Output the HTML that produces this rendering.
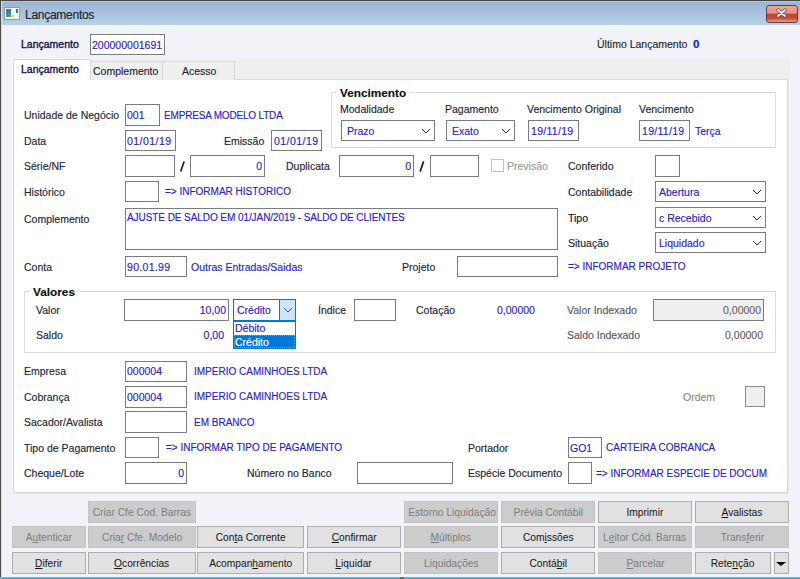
<!DOCTYPE html><html><head><meta charset="utf-8"><style>
*{margin:0;padding:0;box-sizing:content-box}
html,body{width:800px;height:579px;overflow:hidden;background:#f2f3f8;position:relative;font-family:"Liberation Sans",sans-serif}
.t{position:absolute;white-space:nowrap;-webkit-text-stroke:0.15px currentColor}
.b{position:absolute;border:1px solid #797d82}
.r{position:absolute}
.btn{position:absolute;border:1px solid #adadad;background:#e1e1e1;color:#141414;font-size:11px;text-align:center;white-space:nowrap}
.btn span{display:inline-block;transform:scaleX(0.93)}
.btn.dis{border-color:#c4c4c4;background:#cccccc;color:#7c7c7c}
</style></head><body>
<div class="r" style="left:0px;top:0px;width:800px;height:25px;background:linear-gradient(#98b3d2,#b8d0e8);"></div>
<div class="r" style="left:0px;top:0px;width:800px;height:1px;background:#454545;"></div>
<div class="r" style="left:0px;top:1px;width:800px;height:1px;background:#b4c8de;"></div>
<div class="r" style="left:0px;top:0px;width:1px;height:579px;background:#4a4a4a;"></div>
<div class="r" style="left:1px;top:1px;width:1px;height:578px;background:#d7e4f2;"></div>
<div class="r" style="left:4px;top:7px;width:14px;height:11px;background:#f4f4f4;border:1px solid #9a9a9a;"></div>
<div class="r" style="left:6px;top:9px;width:5px;height:8px;background:linear-gradient(#4070b8,#40a868);"></div>
<div class="r" style="left:16px;top:9px;width:2px;height:4px;background:linear-gradient(#2a5ab0,#3a9a50);"></div>
<div class="r" style="left:12px;top:15px;width:2px;height:2px;background:#c8c8c8;"></div>
<div class="t" style="left:25px;top:7.5px;color:#1e2430;font-size:12px;line-height:14px;letter-spacing:-0.27px;">Lançamentos</div>
<div class="r" style="left:766px;top:5px;width:30px;height:16px;border:1px solid #6a3a40;border-radius:3px;background:linear-gradient(#eba79a 0%,#e39180 45%,#c8432a 50%,#c94a30 75%,#e0a090 100%);"></div>
<svg class="r" style="left:775px;top:7px" width="13" height="12"><path d="M3 3 L10 9 M10 3 L3 9" stroke="#505060" stroke-width="3.4" stroke-linecap="round"/><path d="M3 3 L10 9 M10 3 L3 9" stroke="#f4f4f4" stroke-width="1.8" stroke-linecap="round"/></svg>
<div class="r" style="left:2px;top:25px;width:798px;height:552px;background:#f2f3f8;"></div>
<div class="r" style="left:0px;top:577px;width:800px;height:2px;background:linear-gradient(#5cd2ee,#14aacb);"></div>
<div class="r" style="left:400px;top:577px;width:4px;height:2px;background:#6a6e72;"></div>
<div class="t" style="left:21px;top:37.0px;color:#14144a;font-size:10.5px;line-height:14px;-webkit-text-stroke:0.35px currentColor">Lançamento</div>
<div class="b" style="left:90px;top:34px;width:73px;height:19px;background:#fff;border-color:#797d82;"></div>
<div class="t" style="left:92px;top:37.5px;color:#2c24c0;font-size:10.5px;line-height:14px;">200000001691</div>
<div class="t" style="left:597px;top:37.0px;color:#262636;font-size:10.5px;line-height:14px;">Último Lançamento</div>
<div class="t" style="left:693px;top:37.0px;color:#1414f0;font-size:11.5px;line-height:14px;font-weight:bold;">0</div>
<div class="r" style="left:13px;top:59px;width:777px;height:20px;background:#efefef;"></div>
<div class="r" style="left:13px;top:79px;width:773px;height:412px;background:#fff;border:1px solid #d9d9d9;box-shadow:1px 1px 0 #e6e6ea"></div>
<div class="r" style="left:90px;top:61px;width:71px;height:18px;background:#efefef;border:1px solid #d9d9d9;border-bottom:none"></div>
<div class="r" style="left:163px;top:61px;width:71px;height:18px;background:#efefef;border:1px solid #d9d9d9;border-bottom:none;border-left:none"></div>
<div class="r" style="left:13px;top:59px;width:76px;height:20px;background:#fff;border:1px solid #d9d9d9;border-bottom:none"></div>
<div class="t" style="left:21px;top:61.5px;color:#14144a;font-size:10.5px;line-height:14px;-webkit-text-stroke:0.35px currentColor">Lançamento</div>
<div class="t" style="left:93px;top:64.0px;color:#262636;font-size:10.5px;line-height:14px;">Complemento</div>
<div class="t" style="left:182px;top:64.0px;color:#262636;font-size:10.5px;line-height:14px;">Acesso</div>
<div class="t" style="left:24px;top:108.0px;color:#262636;font-size:10.5px;line-height:14px;">Unidade de Negócio</div>
<div class="b" style="left:125px;top:104px;width:33px;height:20px;background:#fff;border-color:#797d82;"></div>
<div class="t" style="left:127px;top:108.0px;color:#2c24c0;font-size:10.5px;line-height:14px;">001</div>
<div class="t" style="left:164px;top:108.75px;color:#2c24c0;font-size:10px;line-height:14px;letter-spacing:-0.18px;">EMPRESA MODELO LTDA</div>
<div class="t" style="left:24px;top:133.5px;color:#262636;font-size:10.5px;line-height:14px;">Data</div>
<div class="b" style="left:125px;top:130px;width:49px;height:19px;background:#fff;border-color:#797d82;"></div>
<div class="t" style="left:127px;top:133.5px;color:#2c24c0;font-size:10.5px;line-height:14px;letter-spacing:0.45px;">01/01/19</div>
<div class="t" style="left:224px;top:133.5px;color:#262636;font-size:10.5px;line-height:14px;">Emissão</div>
<div class="b" style="left:271px;top:130px;width:49px;height:19px;background:#fff;border-color:#797d82;"></div>
<div class="t" style="left:274px;top:133.5px;color:#2c24c0;font-size:10.5px;line-height:14px;letter-spacing:0.45px;">01/01/19</div>
<div class="b" style="left:331px;top:92px;width:443px;height:54px;background:transparent;border-color:#dcdcdc;"></div>
<div class="r" style="left:336px;top:86px;width:74px;height:10px;background:#fff;"></div>
<div class="t" style="left:340px;top:85.5px;color:#101010;font-size:11.8px;line-height:14px;font-weight:bold;">Vencimento</div>
<div class="t" style="left:340px;top:101.5px;color:#262636;font-size:10.5px;line-height:14px;">Modalidade</div>
<div class="t" style="left:445px;top:101.5px;color:#262636;font-size:10.5px;line-height:14px;">Pagamento</div>
<div class="t" style="left:527px;top:101.5px;color:#262636;font-size:10.5px;line-height:14px;">Vencimento Original</div>
<div class="t" style="left:639px;top:101.5px;color:#262636;font-size:10.5px;line-height:14px;">Vencimento</div>
<div class="b" style="left:341px;top:120px;width:92px;height:19px;background:#fff;border-color:#797d82;"></div>
<div class="t" style="left:347px;top:123.5px;color:#2c24c0;font-size:10.5px;line-height:14px;">Prazo</div>
<svg class="r" style="left:420.5px;top:127.5px" width="10" height="6"><path d="M1 1 L5 5 L9 1" fill="none" stroke="#333" stroke-width="1"/></svg>
<div class="b" style="left:446px;top:120px;width:67px;height:19px;background:#fff;border-color:#797d82;"></div>
<div class="t" style="left:452px;top:123.5px;color:#2c24c0;font-size:10.5px;line-height:14px;">Exato</div>
<svg class="r" style="left:500.5px;top:127.5px" width="10" height="6"><path d="M1 1 L5 5 L9 1" fill="none" stroke="#333" stroke-width="1"/></svg>
<div class="b" style="left:528px;top:120px;width:49px;height:19px;background:#fff;border-color:#797d82;"></div>
<div class="t" style="left:531px;top:124.0px;color:#2c24c0;font-size:10.5px;line-height:14px;letter-spacing:0.3px;">19/11/19</div>
<div class="b" style="left:639px;top:120px;width:49px;height:19px;background:#fff;border-color:#797d82;"></div>
<div class="t" style="left:642px;top:124.0px;color:#2c24c0;font-size:10.5px;line-height:14px;letter-spacing:0.3px;">19/11/19</div>
<div class="t" style="left:695px;top:124.0px;color:#2c24c0;font-size:10.5px;line-height:14px;">Terça</div>
<div class="t" style="left:24px;top:159.0px;color:#262636;font-size:10.5px;line-height:14px;">Série/NF</div>
<div class="b" style="left:125px;top:155px;width:48px;height:20px;background:#fff;border-color:#797d82;"></div>
<svg class="r" style="left:176px;top:158px" width="14" height="16"><path d="M4.7 13.6 L8.1 3.4" stroke="#1e1e3a" stroke-width="1.7"/></svg>
<div class="b" style="left:190px;top:155px;width:73px;height:20px;background:#fff;border-color:#797d82;"></div>
<div class="t" style="right:538px;top:159.0px;color:#2c24c0;font-size:10.5px;line-height:14px;">0</div>
<div class="t" style="left:286px;top:159.0px;color:#262636;font-size:10.5px;line-height:14px;">Duplicata</div>
<div class="b" style="left:339px;top:155px;width:73px;height:20px;background:#fff;border-color:#797d82;"></div>
<div class="t" style="right:389px;top:159.0px;color:#2c24c0;font-size:10.5px;line-height:14px;">0</div>
<svg class="r" style="left:416px;top:158px" width="14" height="16"><path d="M4.1 13.6 L7.6 3.4" stroke="#1e1e3a" stroke-width="1.7"/></svg>
<div class="b" style="left:430px;top:155px;width:47px;height:20px;background:#fff;border-color:#797d82;"></div>
<div class="b" style="left:491px;top:159px;width:11px;height:11px;background:#fff;border-color:#c6c6c6;"></div>
<div class="t" style="left:507px;top:159.0px;color:#9a9a9a;font-size:10.5px;line-height:14px;">Previsão</div>
<div class="t" style="left:568px;top:159.0px;color:#262636;font-size:10.5px;line-height:14px;">Conferido</div>
<div class="b" style="left:655px;top:155px;width:23px;height:20px;background:#fff;border-color:#797d82;"></div>
<div class="t" style="left:24px;top:184.5px;color:#262636;font-size:10.5px;line-height:14px;">Histórico</div>
<div class="b" style="left:125px;top:181px;width:32px;height:19px;background:#fff;border-color:#797d82;"></div>
<div class="t" style="left:165px;top:185.25px;color:#2c24c0;font-size:10px;line-height:14px;">=&gt; INFORMAR HISTORICO</div>
<div class="t" style="left:568px;top:184.5px;color:#262636;font-size:10.5px;line-height:14px;">Contabilidade</div>
<div class="b" style="left:655px;top:181px;width:109px;height:19px;background:#fff;border-color:#797d82;"></div>
<div class="t" style="left:659px;top:184.5px;color:#2c24c0;font-size:10.5px;line-height:14px;">Abertura</div>
<svg class="r" style="left:751.5px;top:188.5px" width="10" height="6"><path d="M1 1 L5 5 L9 1" fill="none" stroke="#333" stroke-width="1"/></svg>
<div class="t" style="left:24px;top:211.5px;color:#262636;font-size:10.5px;line-height:14px;">Complemento</div>
<div class="b" style="left:125px;top:208px;width:431px;height:40px;background:#fff;border-color:#797d82;"></div>
<div class="t" style="left:127px;top:211.25px;color:#2c24c0;font-size:10px;line-height:14px;letter-spacing:-0.07px;">AJUSTE DE SALDO EM 01/JAN/2019 - SALDO DE CLIENTES</div>
<div class="t" style="left:568px;top:210.5px;color:#101030;font-size:10.5px;line-height:14px;">Tipo</div>
<div class="b" style="left:655px;top:207px;width:109px;height:19px;background:#fff;border-color:#797d82;"></div>
<div class="t" style="left:659px;top:210.5px;color:#2c24c0;font-size:10.5px;line-height:14px;">c Recebido</div>
<svg class="r" style="left:751.5px;top:214.5px" width="10" height="6"><path d="M1 1 L5 5 L9 1" fill="none" stroke="#333" stroke-width="1"/></svg>
<div class="t" style="left:568px;top:236.0px;color:#262636;font-size:10.5px;line-height:14px;">Situação</div>
<div class="b" style="left:655px;top:232px;width:109px;height:19px;background:#fff;border-color:#797d82;"></div>
<div class="t" style="left:659px;top:235.5px;color:#2c24c0;font-size:10.5px;line-height:14px;">Liquidado</div>
<svg class="r" style="left:751.5px;top:239.5px" width="10" height="6"><path d="M1 1 L5 5 L9 1" fill="none" stroke="#333" stroke-width="1"/></svg>
<div class="t" style="left:24px;top:259.5px;color:#262636;font-size:10.5px;line-height:14px;">Conta</div>
<div class="b" style="left:125px;top:256px;width:60px;height:19px;background:#fff;border-color:#797d82;"></div>
<div class="t" style="left:127px;top:259.5px;color:#2c24c0;font-size:10.5px;line-height:14px;letter-spacing:0.3px;">90.01.99</div>
<div class="t" style="left:191px;top:259.5px;color:#2c24c0;font-size:10.5px;line-height:14px;">Outras Entradas/Saidas</div>
<div class="t" style="left:402px;top:259.5px;color:#262636;font-size:10.5px;line-height:14px;">Projeto</div>
<div class="b" style="left:457px;top:256px;width:99px;height:19px;background:#fff;border-color:#797d82;"></div>
<div class="t" style="left:568px;top:260.25px;color:#2c24c0;font-size:10px;line-height:14px;">=&gt; INFORMAR PROJETO</div>
<div class="b" style="left:24px;top:291px;width:750px;height:60px;background:transparent;border-color:#dcdcdc;"></div>
<div class="r" style="left:30px;top:285px;width:46px;height:12px;background:#fff;"></div>
<div class="t" style="left:33px;top:285.0px;color:#101010;font-size:11.8px;line-height:14px;font-weight:bold;">Valores</div>
<div class="t" style="left:36px;top:303.0px;color:#262636;font-size:10.5px;line-height:14px;">Valor</div>
<div class="b" style="left:124px;top:299px;width:103px;height:20px;background:#fff;border-color:#797d82;"></div>
<div class="t" style="right:574px;top:303.0px;color:#2c24c0;font-size:10.5px;line-height:14px;">10,00</div>
<div class="r" style="left:233px;top:299px;width:61px;height:20px;background:#fff;border:1px solid #0078d7;"></div>
<div class="r" style="left:279px;top:300px;width:16px;height:20px;background:#cce4f7;border-left:1px solid #0078d7;box-sizing:border-box"></div>
<svg class="r" style="left:282.5px;top:307px" width="10" height="6"><path d="M1 1 L5 5 L9 1" fill="none" stroke="#555" stroke-width="1"/></svg>
<div class="t" style="left:237px;top:303.0px;color:#2c24c0;font-size:10.5px;line-height:14px;">Crédito</div>
<div class="r" style="left:233px;top:321px;width:61px;height:26px;background:#fff;border:1px solid #0078d7;"></div>
<div class="r" style="left:234px;top:335px;width:61px;height:13px;background:#0078d7;"></div>
<div class="r" style="left:234px;top:335px;width:59px;height:11px;border:1px dotted #c89040;"></div>
<div class="t" style="left:235px;top:320.5px;color:#2c24c0;font-size:10.5px;line-height:14px;">Débito</div>
<div class="t" style="left:235px;top:334.5px;color:#ffffff;font-size:10.5px;line-height:14px;">Crédito</div>
<div class="t" style="left:318px;top:303.0px;color:#262636;font-size:10.5px;line-height:14px;">Índice</div>
<div class="b" style="left:354px;top:299px;width:40px;height:20px;background:#fff;border-color:#797d82;"></div>
<div class="t" style="left:416px;top:303.0px;color:#262636;font-size:10.5px;line-height:14px;">Cotação</div>
<div class="t" style="left:497px;top:303.0px;color:#2c24c0;font-size:10.5px;line-height:14px;">0,00000</div>
<div class="t" style="left:567px;top:303.0px;color:#5a5a66;font-size:10.5px;line-height:14px;">Valor Indexado</div>
<div class="b" style="left:653px;top:299px;width:109px;height:20px;background:#efefef;border-color:#797d82;"></div>
<div class="t" style="right:39px;top:303.0px;color:#6a6a6a;font-size:10.5px;line-height:14px;">0,00000</div>
<div class="t" style="left:36px;top:328.0px;color:#262636;font-size:10.5px;line-height:14px;">Saldo</div>
<div class="t" style="right:576px;top:328.0px;color:#2c24c0;font-size:10.5px;line-height:14px;">0,00</div>
<div class="t" style="left:567px;top:328.0px;color:#585864;font-size:10.5px;line-height:14px;">Saldo Indexado</div>
<div class="t" style="right:37px;top:328.0px;color:#606068;font-size:10.5px;line-height:14px;">0,00000</div>
<div class="t" style="left:24px;top:364.0px;color:#262636;font-size:10.5px;line-height:14px;">Empresa</div>
<div class="b" style="left:125px;top:361px;width:60px;height:19px;background:#fff;border-color:#797d82;"></div>
<div class="t" style="left:127px;top:364.0px;color:#2c24c0;font-size:10.5px;line-height:14px;">000004</div>
<div class="t" style="left:194px;top:364.75px;color:#2c24c0;font-size:10px;line-height:14px;">IMPERIO CAMINHOES LTDA</div>
<div class="t" style="left:24px;top:389.5px;color:#262636;font-size:10.5px;line-height:14px;">Cobrança</div>
<div class="b" style="left:125px;top:386px;width:60px;height:20px;background:#fff;border-color:#797d82;"></div>
<div class="t" style="left:127px;top:389.5px;color:#2c24c0;font-size:10.5px;line-height:14px;">000004</div>
<div class="t" style="left:194px;top:390.25px;color:#2c24c0;font-size:10px;line-height:14px;">IMPERIO CAMINHOES LTDA</div>
<div class="t" style="left:683px;top:389.5px;color:#8a8a8a;font-size:10.5px;line-height:14px;">Ordem</div>
<div class="b" style="left:745px;top:386px;width:18px;height:19px;background:#efefef;border-color:#8a8a8a;"></div>
<div class="t" style="left:24px;top:415.0px;color:#262636;font-size:10.5px;line-height:14px;">Sacador/Avalista</div>
<div class="b" style="left:125px;top:411px;width:60px;height:20px;background:#fff;border-color:#797d82;"></div>
<div class="t" style="left:194px;top:415.75px;color:#2c24c0;font-size:10px;line-height:14px;">EM BRANCO</div>
<div class="t" style="left:24px;top:440.5px;color:#262636;font-size:10.5px;line-height:14px;">Tipo de Pagamento</div>
<div class="b" style="left:125px;top:437px;width:32px;height:19px;background:#fff;border-color:#797d82;"></div>
<div class="t" style="left:166px;top:441.25px;color:#2c24c0;font-size:10px;line-height:14px;">=&gt; INFORMAR TIPO DE PAGAMENTO</div>
<div class="t" style="left:468px;top:440.5px;color:#262636;font-size:10.5px;line-height:14px;">Portador</div>
<div class="b" style="left:568px;top:437px;width:32px;height:19px;background:#fff;border-color:#797d82;"></div>
<div class="t" style="left:570px;top:440.5px;color:#2c24c0;font-size:10.5px;line-height:14px;">GO1</div>
<div class="t" style="left:606px;top:441.25px;color:#2c24c0;font-size:10px;line-height:14px;">CARTEIRA COBRANCA</div>
<div class="t" style="left:24px;top:466.0px;color:#262636;font-size:10.5px;line-height:14px;">Cheque/Lote</div>
<div class="b" style="left:125px;top:462px;width:60px;height:20px;background:#fff;border-color:#797d82;"></div>
<div class="t" style="right:616px;top:466.0px;color:#2c24c0;font-size:10.5px;line-height:14px;">0</div>
<div class="t" style="left:247px;top:466.0px;color:#262636;font-size:10.5px;line-height:14px;">Número no Banco</div>
<div class="b" style="left:357px;top:462px;width:94px;height:20px;background:#fff;border-color:#797d82;"></div>
<div class="t" style="left:468px;top:466.0px;color:#262636;font-size:10.5px;line-height:14px;">Espécie Documento</div>
<div class="b" style="left:568px;top:462px;width:22px;height:20px;background:#fff;border-color:#797d82;"></div>
<div class="t" style="left:596px;top:466.75px;color:#2c24c0;font-size:10px;line-height:14px;">=&gt; INFORMAR ESPECIE DE DOCUM</div>
<div class="btn dis" style="left:88px;top:501px;width:106px;height:20px;line-height:20px"><span>Criar Cfe Cod. Barras</span></div>
<div class="btn dis" style="left:404px;top:501px;width:92px;height:20px;line-height:20px"><span>Estorno Liquidação</span></div>
<div class="btn dis" style="left:501px;top:501px;width:92px;height:20px;line-height:20px"><span>Prévia Contábil</span></div>
<div class="btn" style="left:598px;top:501px;width:92px;height:20px;line-height:20px"><span>Imprimir</span></div>
<div class="btn" style="left:695px;top:501px;width:92px;height:20px;line-height:20px"><span><u>A</u>valistas</span></div>
<div class="btn dis" style="left:12px;top:526px;width:72px;height:20px;line-height:20px"><span>A<u>u</u>tenticar</span></div>
<div class="btn dis" style="left:88px;top:526px;width:106px;height:20px;line-height:20px"><span>Cria<u>r</u> Cfe. Modelo</span></div>
<div class="btn" style="left:197px;top:526px;width:105px;height:20px;line-height:20px"><span>Con<u>t</u>a Corrente</span></div>
<div class="btn" style="left:307px;top:526px;width:92px;height:20px;line-height:20px"><span><u>C</u>onfirmar</span></div>
<div class="btn dis" style="left:404px;top:526px;width:92px;height:20px;line-height:20px"><span><u>M</u>últiplos</span></div>
<div class="btn" style="left:501px;top:526px;width:92px;height:20px;line-height:20px"><span>Com<u>i</u>ssões</span></div>
<div class="btn dis" style="left:598px;top:526px;width:92px;height:20px;line-height:20px"><span>L<u>e</u>itor Cód. Barras</span></div>
<div class="btn dis" style="left:695px;top:526px;width:92px;height:20px;line-height:20px"><span>Trans<u>f</u>erir</span></div>
<div class="btn" style="left:12px;top:552px;width:72px;height:20px;line-height:20px"><span><u>D</u>iferir</span></div>
<div class="btn" style="left:88px;top:552px;width:106px;height:20px;line-height:20px"><span><u>O</u>corrências</span></div>
<div class="btn" style="left:197px;top:552px;width:105px;height:20px;line-height:20px"><span>Acompan<u>h</u>amento</span></div>
<div class="btn" style="left:307px;top:552px;width:92px;height:20px;line-height:20px"><span><u>L</u>iquidar</span></div>
<div class="btn dis" style="left:404px;top:552px;width:92px;height:20px;line-height:20px"><span>Liquidações</span></div>
<div class="btn" style="left:501px;top:552px;width:92px;height:20px;line-height:20px"><span>Contá<u>b</u>il</span></div>
<div class="btn dis" style="left:598px;top:552px;width:92px;height:20px;line-height:20px"><span><u>P</u>arcelar</span></div>
<div class="btn" style="left:695px;top:552px;width:74px;height:20px;line-height:20px"><span>Rete<u>n</u>ção</span></div>
<div class="btn" style="left:774px;top:552px;width:13px;height:20px;line-height:20px"><span></span></div>
<svg class="r" style="left:776px;top:562px" width="10" height="4"><path d="M0 0 L10 0 L5 4 Z" fill="#000"/></svg>
</body></html>
